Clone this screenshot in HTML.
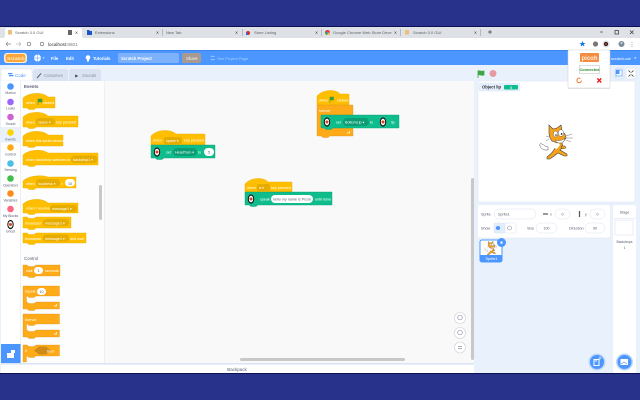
<!DOCTYPE html>
<html><head><meta charset="utf-8"><style>
html,body{margin:0;padding:0;width:640px;height:400px;overflow:hidden;background:#28328a}
svg{display:block;position:absolute;left:0;top:0}
text{font-family:"Liberation Sans",sans-serif;font-size:3.7px;fill:#575e75}
.w{fill:#fff}.b{fill:#fff;font-weight:bold;font-size:4.2px}.d{fill:#575e75;font-size:3.7px}.k{fill:#333;font-size:4.5px}
.h{font-weight:bold;font-size:4.4px}
</style></head><body>
<svg width="640" height="400" viewBox="0 0 640 400">
<defs>
<g id="eye"><ellipse cx="0" cy="0" rx="3.2" ry="4.6" fill="#111"/><ellipse cx="0" cy="0" rx="2.2" ry="3.4" fill="#fff"/><circle cx="0" cy="0" r="1.5" fill="#d8431f"/></g>
<g id="cat">
<path d="M545 150c-3-1-6-3-5-6 1-1 4 1 5 2l3 1 0 3z" fill="#fff" stroke="#555" stroke-width=".5"/>
<path d="M547 157c2-2 5-3 8-9l2-6 5 1 1 4-3 3 7 4 0 2-3 0-6-3-4 3-4 3-3 0z" fill="#f7a21b" stroke="#444" stroke-width=".6"/>
<path d="M553 144c1-2 3-2 5-2l2 3-3 4-3-1z" fill="#fff"/>
<path d="M549 134L549 125L553 129L557 128L561 125L562 131L565 134L566 138L563 142L557 143L552 141L550 138Z" fill="#f7a21b" stroke="#444" stroke-width=".6"/>
<path d="M555 140c3 1 7 1 10-2-1 4-3 5-5 5s-4-1-5-3z" fill="#fff" stroke="#444" stroke-width=".4"/>
<ellipse cx="561" cy="133" rx="2.800" ry="3.400" fill="#fff" stroke="#444" stroke-width=".4"/>
<ellipse cx="555.6" cy="134" rx="2.200" ry="3" fill="#fff" stroke="#444" stroke-width=".4"/>
<circle cx="561.6" cy="134" r=".9" fill="#222"/><circle cx="556" cy="135" r=".8" fill="#222"/>
<path d="M566 136l6-2M566 138l7 0M566 140l5 2M549 137l-3-1M549 139l-3 2" stroke="#555" stroke-width=".4" fill="none"/>
<path d="M561 146l4 0 1 2-4 1z" fill="#f7a21b" stroke="#444" stroke-width=".5"/>
</g>
</defs>

<rect width="640" height="400" fill="#28328a"/>
<rect y="26" width="640" height="1" fill="#0c1055"/>
<rect y="27" width="640" height="346" fill="#e9f1fc"/>
<rect y="373" width="640" height="1" fill="#0c1055"/>

<!-- tab bar -->
<rect y="27" width="640" height="11" fill="#dee1e6"/>
<path d="M3 38c1 0 2-1 2-3v-5c0-1 1-2 2-2h73c1 0 2 1 2 2v5c0 2 1 3 2 3z" fill="#fff"/>
<rect x="8" y="30" width="4" height="4.500" fill="#eebf7a"/>
<text x="15" y="34" style="font-size:4px;fill:#5f6368">Scratch 3.0 GUI</text>
<rect x="68" y="30" width="4" height="5" fill="#666"/>
<text x="75" y="34.500" class="k" style="font-size:5px">×</text>
<path d="M87 30h2l1 1h2v4h-5z" fill="#1a56c4"/>
<text x="95" y="34" style="font-size:4px;fill:#5f6368">Extensions</text>
<text x="156" y="34.500" class="k" style="font-size:5px">×</text>
<rect x="162" y="29" width=".6" height="7" fill="#9aa0a6"/>
<text x="166" y="34" style="font-size:4px;fill:#5f6368">New Tab</text>
<text x="235" y="34.500" class="k" style="font-size:5px">×</text>
<rect x="242" y="29" width=".6" height="7" fill="#9aa0a6"/>
<circle cx="248" cy="33" r="2" fill="#c33"/><rect x="246" y="33" width="2" height="2" fill="#36c"/>
<text x="254" y="34" style="font-size:4px;fill:#5f6368">Store Listing</text>
<text x="315" y="34.500" class="k" style="font-size:5px">×</text>
<rect x="321" y="29" width=".6" height="7" fill="#9aa0a6"/>
<circle cx="327.500" cy="32.500" r="2.500" fill="#e33"/><path d="M327.500 32.500l2.500 0a2.500 2.500 0 0 1-3 2.400z" fill="#fbc02d"/><path d="M327.500 32.500l-.5 2.400a2.500 2.500 0 0 1-2-3z" fill="#34a853"/><circle cx="327.500" cy="32.500" r="1" fill="#4285f4"/>
<text x="333" y="34" style="font-size:4px;fill:#5f6368">Google Chrome Web Store Deve</text>
<text x="394" y="34.500" class="k" style="font-size:5px">×</text>
<rect x="400" y="29" width=".6" height="7" fill="#9aa0a6"/>
<rect x="405" y="30" width="4" height="4.500" fill="#eebf7a"/>
<text x="413" y="34" style="font-size:4px;fill:#5f6368">Scratch 3.0 GUI</text>
<text x="474" y="34.500" class="k" style="font-size:5px">×</text>
<rect x="480" y="29" width=".6" height="7" fill="#9aa0a6"/>
<path d="M488 32h4M490 30v4" stroke="#444" stroke-width=".7"/>
<path d="M600 32h3" stroke="#444" stroke-width=".7"/>
<rect x="615" y="30.500" width="3.500" height="3.500" fill="none" stroke="#333" stroke-width=".7"/>
<path d="M630 30.500l3.500 3.500M633.500 30.500l-3.500 3.500" stroke="#333" stroke-width=".7"/>

<!-- toolbar -->
<rect y="38" width="640" height="12" fill="#fff"/>
<path d="M6 44h5M6 44l2-2M6 44l2 2" stroke="#888" stroke-width=".7" fill="none"/>
<path d="M21 44h-5M21 44l-2-2M21 44l-2 2" stroke="#bbb" stroke-width=".7" fill="none"/>
<circle cx="29" cy="44" r="1.800" fill="none" stroke="#666" stroke-width=".7"/>
<circle cx="42" cy="44" r="1.800" fill="none" stroke="#555" stroke-width=".6"/>
<text x="48" y="46" style="font-size:4.6px;fill:#333">localhost<tspan fill="#777">:8601</tspan></text>
<path d="M582.500 41l.9 2h2.100l-1.700 1.300.6 2.100-1.900-1.200-1.900 1.200.6-2.100-1.700-1.300h2.100z" fill="#1a73e8"/>
<circle cx="595.500" cy="44" r="2.600" fill="#777"/>
<circle cx="606" cy="44" r="3.600" fill="#e1e3e6"/>
<circle cx="606" cy="44" r="2.100" fill="#222"/><circle cx="606" cy="44" r="1" fill="#d8431f"/>
<circle cx="621.500" cy="44" r="3" fill="#7c8b99"/><circle cx="621.500" cy="43" r="1" fill="#cfd8dc"/>
<path d="M632 42v.6M632 44v.6M632 46v.6" stroke="#666" stroke-width=".8"/>

<!-- menu bar -->
<rect y="50" width="640" height="15" fill="#4c97ff"/>
<rect y="50" width="640" height="1" fill="#3a84ea"/>
<rect x="4" y="53" width="23" height="10" rx="3" fill="#fff2c8"/>
<rect x="5.500" y="54" width="20" height="8" rx="2.500" fill="#f9a63f"/>
<text x="7" y="59.800" style="font-size:4.800px;font-weight:bold;fill:#fff0c0">Scratch</text>
<circle cx="37.500" cy="58" r="3.500" fill="#fff"/><path d="M34 58h7M37.500 54.500v7" stroke="#4c97ff" stroke-width=".5"/>
<path d="M42.500 57.500h2l-1 1.200z" fill="#fff"/>
<text x="51" y="60" class="b">File</text>
<text x="66" y="60" class="b">Edit</text>
<circle cx="88" cy="57.500" r="2.300" fill="#fff"/><rect x="87" y="59" width="2" height="2.500" fill="#fff"/>
<text x="93" y="60" class="b">Tutorials</text>
<rect x="118" y="53" width="61" height="10" rx="1.500" fill="#7db1fb"/>
<text x="121" y="60" class="b">Scratch Project</text>
<rect x="182" y="53" width="19" height="10" rx="1.500" fill="#a69a92"/>
<text x="186" y="60" style="fill:#e8e2dc;font-weight:bold;font-size:4.200px">Share</text>
<path d="M211 57a2.200 2.200 0 0 1 3.500 0M214.500 59a2.200 2.200 0 0 1-3.500 0" stroke="#bcd7fd" stroke-width=".7" fill="none"/>
<text x="217" y="60" style="fill:#a9cdfd;font-size:4px">See Project Page</text>
<text x="611" y="60" class="w" style="font-size:4px">scratch-cat</text>
<path d="M634 57.500h2.500l-1.250 1.300z" fill="#fff"/>

<!-- tabs -->
<path d="M1 81v-9c0-2 1-3 3-3h25c2 0 3 1 3 3v9z" fill="#fff" stroke="#d9e3f2" stroke-width=".5"/>
<path d="M33 81v-9c0-2 1-3 3-3h29c2 0 3 1 3 3v9z" fill="#d9e3f2"/>
<path d="M69 81v-9c0-2 1-3 3-3h26c2 0 3 1 3 3v9z" fill="#d9e3f2"/>
<rect x="8" y="73" width="4.500" height="1.300" fill="#4c97ff"/><rect x="9" y="75" width="4.500" height="1.300" fill="#4c97ff"/>
<text x="15" y="77" style="fill:#4c97ff;font-size:4.500px">Code</text>
<path d="M37 78l4-4.500" stroke="#575e75" stroke-width="1"/>
<text x="44" y="77" style="fill:#8c93a6;font-size:4.200px">Costumes</text>
<path d="M75 74.500v3l1.500-.5h1v-2h-1z" fill="#575e75"/>
<text x="82" y="77" style="fill:#8c93a6;font-size:4.200px">Sounds</text>

<!-- categories + palette -->
<rect x="1" y="81" width="20" height="282" fill="#fff"/>
<rect x="21" y="81" width="84" height="282" fill="#f9f9f9"/>
<rect x="21" y="81" width="84" height="282" fill="#fff" opacity=".6"/>
<rect x="1" y="127" width="20" height="15.500" fill="#e9f1fc"/>
<rect x="1" y="344" width="20" height="19" fill="#4c97ff"/>
<rect x="7" y="353" width="7" height="5" fill="#fff"/><rect x="11" y="350" width="4" height="3" fill="#fff"/>
<rect x="20.500" y="81" width=".5" height="282" fill="#d9e3f2"/>
<rect x="104.500" y="81" width=".5" height="282" fill="#d9e3f2"/>

<circle cx="10.500" cy="86.500" r="3.300" fill="#4c97ff"/><text x="10.500" y="94" text-anchor="middle" style="font-size:3.400px">Motion</text>
<circle cx="10.500" cy="102" r="3.300" fill="#9966ff"/><text x="10.500" y="109.500" text-anchor="middle" style="font-size:3.400px">Looks</text>
<circle cx="10.500" cy="117" r="3.300" fill="#cf63cf"/><text x="10.500" y="125" text-anchor="middle" style="font-size:3.400px">Sound</text>
<circle cx="10.500" cy="132.500" r="3.300" fill="#ffd500"/><text x="10.500" y="140.500" text-anchor="middle" style="font-size:3.400px">Events</text>
<circle cx="10.500" cy="147.500" r="3.300" fill="#ffab19"/><text x="10.500" y="155.500" text-anchor="middle" style="font-size:3.400px">Control</text>
<circle cx="10.500" cy="163.500" r="3.300" fill="#4cbfe6"/><text x="10.500" y="171" text-anchor="middle" style="font-size:3.400px">Sensing</text>
<circle cx="10.500" cy="178.500" r="3.300" fill="#40bf4a"/><text x="10.500" y="186.500" text-anchor="middle" style="font-size:3.400px">Operators</text>
<circle cx="10.500" cy="193.500" r="3.300" fill="#ff8c1a"/><text x="10.500" y="201.500" text-anchor="middle" style="font-size:3.400px">Variables</text>
<circle cx="10.500" cy="209" r="3.300" fill="#ff6680"/><text x="10.500" y="217" text-anchor="middle" style="font-size:3.400px">My Blocks</text>
<use href="#eye" x="10.500" y="224.500"/><text x="10.500" y="232.500" text-anchor="middle" style="font-size:3.400px">Ghost</text>

<text x="24" y="88" class="h">Events</text>
<!-- palette blocks -->
<path d="M23 98C29 92 43 92 48 97H55V108H36l-2 1.500h-5l-2-1.500H23Z" fill="#ffbf00" stroke="#e6ac00" stroke-width=".4"/>
<text x="26" y="104" class="w">when</text><path d="M38 99v6M38 99h4v3h-4" fill="#3c9c3c" stroke="#3c9c3c" stroke-width=".6"/><text x="43" y="104" class="w">clicked</text>
<path d="M23 117C29 111 43 111 48 116H78V127H36l-2 1.500h-5l-2-1.500H23Z" fill="#ffbf00" stroke="#e6ac00" stroke-width=".4"/>
<text x="26" y="123.500" class="w">when</text><rect x="36" y="118" width="19" height="7" rx="3" fill="#e6ac00"/><text x="38" y="123.500" class="w">space ▾</text><text x="56" y="123.500" class="w">key pressed</text>
<path d="M23 136C29 130 43 130 48 135H63V146H36l-2 1.500h-5l-2-1.500H23Z" fill="#ffbf00" stroke="#e6ac00" stroke-width=".4"/>
<text x="26" y="142" class="w">when this sprite clicked</text>
<path d="M23 155C29 149 43 149 48 153H98V165H36l-2 1.500h-5l-2-1.500H23Z" fill="#ffbf00" stroke="#e6ac00" stroke-width=".4"/>
<text x="26" y="161" class="w">when backdrop switches to</text><rect x="71" y="155.500" width="26" height="7.500" rx="3" fill="#e6ac00"/><text x="73" y="161" class="w">backdrop1 ▾</text>
<path d="M23 181C29 175 43 175 48 177H76V188H36l-2 1.500h-5l-2-1.500H23Z" fill="#ffbf00" stroke="#e6ac00" stroke-width=".4"/>
<text x="26" y="185" class="w">when</text><rect x="36" y="179" width="24" height="7.500" rx="3" fill="#e6ac00"/><text x="38" y="185" class="w">loudness ▾</text><text x="61" y="185" class="w">&gt;</text><rect x="65" y="179" width="10" height="7.500" rx="3.700" fill="#fff"/><text x="70" y="185" text-anchor="middle">10</text>
<path d="M23 204C29 198 43 198 48 203H78V213H36l-2 1.500h-5l-2-1.500H23Z" fill="#ffbf00" stroke="#e6ac00" stroke-width=".4"/>
<text x="26" y="209.500" class="w">when I receive</text><rect x="50" y="205" width="27" height="7" rx="3" fill="#e6ac00"/><text x="52" y="210" class="w">message1 ▾</text>
<path d="M23 217h4l2 1.500h5l2-1.500H71V228H36l-2 1.500h-5l-2-1.500H23Z" fill="#ffbf00" stroke="#e6ac00" stroke-width=".4"/>
<text x="25" y="224.500" class="w">broadcast</text><rect x="43" y="219" width="26" height="7" rx="3" fill="#e6ac00"/><text x="45" y="224.500" class="w">message1 ▾</text>
<path d="M23 233h4l2 1.500h5l2-1.500H86V243H36l-2 1.500h-5l-2-1.500H23Z" fill="#ffbf00" stroke="#e6ac00" stroke-width=".4"/>
<text x="25" y="240" class="w">broadcast</text><rect x="43" y="234.500" width="26" height="7" rx="3" fill="#e6ac00"/><text x="45" y="240" class="w">message1 ▾</text><text x="70" y="240" class="w">and wait</text>
<text x="24" y="260" class="h" style="font-weight:normal">Control</text>
<path d="M23 265h4l2 1.500h5l2-1.500H60V276H36l-2 1.500h-5l-2-1.500H23Z" fill="#ffab19" stroke="#cf8b17" stroke-width=".3"/>
<text x="26" y="272" class="w">wait</text><rect x="34" y="267" width="9" height="7" rx="3.500" fill="#fff"/><text x="38.500" y="272" text-anchor="middle">1</text><text x="45" y="272" class="w">seconds</text>
<path d="M23 286h36.500V296H36l-2 1.500h-5l-2-1.500h-0.500V302h0.500l2 1.500h5l2-1.500h23.500V309H36l-2 1.500h-5l-2-1.500H23Z" fill="#ffab19" stroke="#cf8b17" stroke-width=".3"/>
<text x="25" y="292.500" class="w">repeat</text><rect x="37" y="288" width="9" height="7" rx="3.500" fill="#fff"/><text x="41.500" y="293" text-anchor="middle">10</text>
<path d="M54 306h2.500v-2" stroke="#fff" stroke-width=".7" fill="none"/>
<path d="M23 314h36.500V324H36l-2 1.500h-5l-2-1.500h-0.500V330h0.500l2 1.500h5l2-1.500h23.500V337H36l-2 1.500h-5l-2-1.500H23Z" fill="#ffab19" stroke="#cf8b17" stroke-width=".3"/>
<text x="25" y="321" class="w">forever</text>
<path d="M54 334h2.500v-2" stroke="#fff" stroke-width=".7" fill="none"/>
<path d="M23 345h4l2 1.500h5l2-1.500h23.500V356H36l-2 1.500h-5l-2-1.500h-0.500V362H23Z" fill="#ffab19" stroke="#cf8b17" stroke-width=".3"/>
<text x="25" y="352" class="w">if</text><path d="M34 350.500l5-4h7l5 4-5 4h-7z" fill="#cf8b17"/><text x="47" y="352.500" class="w">then</text>
<rect x="99" y="185" width="3" height="35" rx="1.500" fill="#c9c9c9"/>

<!-- workspace -->
<rect x="105" y="81" width="369" height="282" fill="#f9f9f9"/>
<rect x="471" y="178" width="3" height="182" rx="1.500" fill="#c8c8c8"/>
<rect x="240" y="358" width="165" height="3" rx="1.500" fill="#c8c8c8"/>
<!-- stack A -->
<path d="M151 136C157 129 171 129 176 134H205V145H164l-2 1.500h-5l-2-1.500H151Z" fill="#ffbf00" stroke="#e6ac00" stroke-width=".4"/>
<text x="153" y="141.500" class="w">when</text><rect x="164" y="137" width="18" height="7" rx="1.500" fill="#e6ac00"/><text x="166" y="142" class="w">space ▾</text><text x="184" y="141.500" class="w">key pressed</text>
<path d="M151 145H215V158H164l-2 1.500h-5l-2-1.500H151Z" fill="#0fbd8c" stroke="#0b9e75" stroke-width=".4"/>
<use href="#eye" x="157" y="152"/>
<text x="166" y="153.500" class="w">set</text><rect x="173" y="148" width="24" height="8" rx="4" fill="#0b9e75"/><text x="175" y="153.500" class="w">HeadTurn ▾</text><text x="198" y="153.500" class="w">to</text><rect x="204" y="148" width="10" height="8" rx="4" fill="#fff"/><text x="209" y="153.500" text-anchor="middle">5</text>
<!-- stack B -->
<path d="M317 96C323 89 336 89 340 94H349V105H330l-2 1.500h-5l-2-1.500H317Z" fill="#ffbf00" stroke="#e6ac00" stroke-width=".4"/>
<text x="319" y="101.500" class="w">when</text><path d="M330 97v6M330 97h3.500v3h-3.500" fill="#3c9c3c" stroke="#3c9c3c" stroke-width=".6"/><text x="337" y="101.500" class="w">clicked</text>
<path d="M317 105H353V115H321V128H353V136H330l-2 1.500h-5l-2-1.500H317Z" fill="#ffab19" stroke="#cf8b17" stroke-width=".3"/>
<text x="319" y="112" class="w">forever</text>
<path d="M347 133h2.500v-2" stroke="#fff" stroke-width=".7" fill="none"/>
<path d="M321 115H399V128H333l-2 1.500h-5l-2-1.500H321Z" fill="#0fbd8c" stroke="#0b9e75" stroke-width=".4"/>
<use href="#eye" x="327" y="122"/>
<text x="336" y="123.500" class="w">set</text><rect x="343" y="118" width="26" height="8" rx="4" fill="#0b9e75"/><text x="345" y="123.500" class="w">BottomLip ▾</text><text x="370" y="123.500" class="w">to</text><use href="#eye" x="383" y="122"/><text x="391" y="123.500" class="w">lip</text>
<!-- stack C -->
<path d="M245 184C251 177 264 177 268 182H292V192H258l-2 1.500h-5l-2-1.500H245Z" fill="#ffbf00" stroke="#e6ac00" stroke-width=".4"/>
<text x="247" y="189" class="w">when</text><rect x="257" y="184" width="13" height="7" rx="1.500" fill="#e6ac00"/><text x="259" y="189" class="w">a ▾</text><text x="271" y="189" class="w">key pressed</text>
<path d="M245 192H332V205H258l-2 1.500h-5l-2-1.500H245Z" fill="#0fbd8c" stroke="#0b9e75" stroke-width=".4"/>
<use href="#eye" x="251" y="199"/>
<text x="260" y="200.500" class="w">speak</text><rect x="271" y="195" width="42" height="8" rx="4" fill="#fff"/><text x="273" y="200.500">hello my name is Picoh</text><text x="315" y="200.500" class="w">until done</text>
<!-- zoom buttons -->
<g fill="#fff" stroke="#d0d0d0" stroke-width=".6"><circle cx="460" cy="318" r="5.500"/><circle cx="460" cy="333" r="5.500"/><circle cx="460" cy="347.500" r="5.500"/></g>
<g fill="none" stroke="#8c93a6" stroke-width=".7"><circle cx="460" cy="317.500" r="2.300"/><circle cx="460" cy="332.500" r="2.300"/><path d="M458 346.500h4M458 348.500h4"/></g>

<!-- backpack -->
<rect x="1" y="363" width="473" height="1.500" fill="#d9e3f2"/>
<rect x="1" y="364.500" width="473" height="8.500" fill="#fff"/>
<text x="237" y="371" text-anchor="middle" style="font-size:4.500px">Backpack</text>

<!-- stage header -->
<path d="M478 71v7M478 71c2-1 3 1 6 0v4c-2 1-4-1-6 0z" fill="#3fa644" stroke="#3fa644" stroke-width=".8"/>
<circle cx="493" cy="73.500" r="3.500" fill="#e59aa4"/>
<rect x="615" y="68" width="9" height="11" rx="1.500" fill="#e9f1fc" stroke="#ccdaf0" stroke-width=".5"/><rect x="616" y="70" width="6" height="6" fill="#fff" stroke="#4c97ff" stroke-width=".6"/><rect x="616" y="70" width="3.500" height="4" fill="#4c97ff"/>
<rect x="626" y="68" width="10" height="11" rx="1.500" fill="#fff" stroke="#ccdaf0" stroke-width=".5"/>
<path d="M628.500 70.500l2 2M633.500 70.500l-2 2M628.500 76.500l2-2M633.500 76.500l-2-2" stroke="#333" stroke-width=".8"/>

<!-- stage -->
<rect x="478" y="81" width="157" height="121" rx="2" fill="#fff" stroke="#d9e3f2" stroke-width=".5"/>
<rect x="479" y="83" width="41" height="8" rx="1" fill="#e6f0ff" stroke="#cfdcf0" stroke-width=".3"/>
<text x="482" y="88.500" style="font-size:4.200px;font-weight:bold;fill:#333">Object lip</text>
<rect x="504" y="85" width="14" height="4.500" rx="1" fill="#0fbd8c"/><text x="511" y="89" text-anchor="middle" style="font-size:3.800px;fill:#fff">5</text>
<use href="#cat"/>

<!-- sprite info -->
<rect x="478" y="205" width="132" height="33" rx="2" fill="#fff"/>
<rect x="478" y="238" width="132" height="135" fill="#e9f1fc"/>
<path d="M478 238h132" stroke="#d9e3f2" stroke-width=".5"/>
<text x="481" y="215.500" class="d">Sprite</text><rect x="494" y="209" width="42" height="10" rx="5" fill="#fff" stroke="#d9e3f2" stroke-width=".5"/><text x="498" y="215.500" class="d">Sprite1</text>
<path d="M543 214h5" stroke="#555" stroke-width="1.200"/><text x="550" y="215.500" class="d">x</text><rect x="555" y="209" width="15" height="10" rx="5" fill="#fff" stroke="#d9e3f2" stroke-width=".5"/><text x="562.500" y="215.500" text-anchor="middle" class="d">0</text>
<path d="M579.500 211v6" stroke="#555" stroke-width="1.200"/><text x="585" y="215.500" class="d">y</text><rect x="590" y="209" width="15" height="10" rx="5" fill="#fff" stroke="#d9e3f2" stroke-width=".5"/><text x="597.500" y="215.500" text-anchor="middle" class="d">0</text>
<text x="481" y="229.500" class="d">Show</text>
<rect x="494" y="223" width="11" height="10" rx="1.500" fill="#e1edfd" stroke="#d9e3f2" stroke-width=".5"/><rect x="505" y="223" width="11" height="10" rx="1.500" fill="#fff" stroke="#d9e3f2" stroke-width=".5"/>
<ellipse cx="498" cy="228" rx="2.200" ry="2" fill="#4c97ff"/><circle cx="509.500" cy="228" r="2" fill="none" stroke="#8c93a6" stroke-width=".6"/>
<text x="527" y="229.500" class="d">Size</text><rect x="536" y="223" width="21" height="10" rx="5" fill="#fff" stroke="#d9e3f2" stroke-width=".5"/><text x="546.500" y="229.500" text-anchor="middle" class="d">100</text>
<text x="569" y="229.500" class="d">Direction</text><rect x="585" y="223" width="20" height="10" rx="5" fill="#fff" stroke="#d9e3f2" stroke-width=".5"/><text x="595" y="229.500" text-anchor="middle" class="d">90</text>

<!-- sprite tile -->
<rect x="480" y="240" width="22" height="22" rx="2" fill="#fff" stroke="#4c97ff" stroke-width="1"/>
<path d="M480 255h22v5a2 2 0 0 1-2 2h-18a2 2 0 0 1-2-2z" fill="#4c97ff"/>
<text x="491.500" y="260" text-anchor="middle" class="w" style="font-size:3.800px">Sprite1</text>
<g transform="translate(484.600 240.500) scale(.4) translate(-540 -123)"><use href="#cat"/></g>
<circle cx="501.500" cy="242.500" r="4.500" fill="#4c97ff"/><rect x="500.500" y="241.500" width="2" height="2.200" fill="#fff"/>

<!-- stage panel -->
<rect x="613" y="205" width="23" height="168" rx="2" fill="#fff"/>
<path d="M613 218.500h23" stroke="#d9e3f2" stroke-width=".5"/>
<text x="624.500" y="213.500" text-anchor="middle" class="d">Stage</text>
<rect x="615" y="220" width="18" height="15" fill="#fff" stroke="#d9e3f2" stroke-width=".6"/>
<text x="624.500" y="243" text-anchor="middle" style="font-size:3.400px">Backdrops</text>
<text x="624.500" y="249" text-anchor="middle" style="font-size:3.400px">1</text>

<!-- fab -->
<circle cx="597" cy="362" r="8.500" fill="#bcd6fb"/><circle cx="597" cy="362" r="7" fill="#4c97ff"/>
<path d="M594 359.500h5v6h-5zM595 361h2" fill="none" stroke="#fff" stroke-width="1"/><path d="M600 356.500v3M598.500 358h3" stroke="#fff" stroke-width=".6"/>
<circle cx="624.500" cy="362" r="8.500" fill="#bcd6fb"/><circle cx="624.500" cy="362" r="7" fill="#4c97ff"/>
<rect x="620.500" y="359" width="7.500" height="6" fill="#fff"/><path d="M621 364l3-2 3 2" stroke="#4c97ff" stroke-width=".6" fill="none"/>

<!-- popup -->
<rect x="568" y="50" width="42" height="38" rx="1" fill="#fff" stroke="#cfcfcf" stroke-width=".5"/>
<rect x="568" y="88" width="42" height=".8" fill="#d8d8d8"/>
<rect x="580" y="53" width="19" height="9" rx="1" fill="#f58a42"/>
<text x="589.500" y="60" text-anchor="middle" style="font-size:6px;font-weight:bold;fill:#fff3dc">picoh</text>
<rect x="579.500" y="65.500" width="20" height="8" fill="#fff" stroke="#bbb" stroke-width=".5"/>
<text x="589.500" y="71" text-anchor="middle" style="font-size:3.900px;font-weight:bold;fill:#2a8a2a">Connected</text>
<path d="M581.500 80.500a2.300 2.300 0 1 1-1-2" fill="none" stroke="#f3701f" stroke-width=".9"/>
<path d="M597.300 78.300l4 4.200M601.300 78.300l-4 4.200" stroke="#ee1111" stroke-width="1.300"/>
</svg>
</body></html>
